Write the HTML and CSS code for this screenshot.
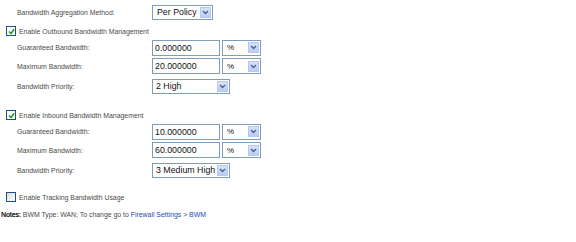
FILE: index.html
```html
<!DOCTYPE html>
<html>
<head>
<meta charset="utf-8">
<link rel="stylesheet" href="styles.css">
</head>
<body>
<div class="page">
  <div class="row r-agg">
    <span class="label">Bandwidth Aggregation Method:</span>
    <span class="sel w-agg"><span class="val">Per Policy</span><span class="btn"><svg width="7" height="5" viewBox="0 0 7 5"><path d="M1 1 L3.5 3.5 L6 1" fill="none" stroke="#4d6185" stroke-width="1.4"/></svg></span></span>
  </div>
  <div class="row r-cb">
    <span class="cb on"><svg width="7" height="7" viewBox="0 0 7 7"><path d="M1 3.5 L3 5.5 L6.2 1.3" fill="none" stroke="#21a121" stroke-width="1.6"/></svg></span>
    <span class="cbtext">Enable Outbound Bandwidth Management</span>
  </div>
  <div class="row r-g">
    <span class="label">Guaranteed Bandwidth:</span>
    <span class="inp">0.000000</span>
    <span class="sel w-pct"><span class="val">%</span><span class="btn"><svg width="7" height="5" viewBox="0 0 7 5"><path d="M1 1 L3.5 3.5 L6 1" fill="none" stroke="#4d6185" stroke-width="1.4"/></svg></span></span>
  </div>
  <div class="row r-m">
    <span class="label">Maximum Bandwidth:</span>
    <span class="inp">20.000000</span>
    <span class="sel w-pct"><span class="val">%</span><span class="btn"><svg width="7" height="5" viewBox="0 0 7 5"><path d="M1 1 L3.5 3.5 L6 1" fill="none" stroke="#4d6185" stroke-width="1.4"/></svg></span></span>
  </div>
  <div class="row r-p">
    <span class="label">Bandwidth Priority:</span>
    <span class="sel w-pri"><span class="val">2 High</span><span class="btn"><svg width="7" height="5" viewBox="0 0 7 5"><path d="M1 1 L3.5 3.5 L6 1" fill="none" stroke="#4d6185" stroke-width="1.4"/></svg></span></span>
  </div>

  <div class="row r-cb gap-top">
    <span class="cb on"><svg width="7" height="7" viewBox="0 0 7 7"><path d="M1 3.5 L3 5.5 L6.2 1.3" fill="none" stroke="#21a121" stroke-width="1.6"/></svg></span>
    <span class="cbtext">Enable Inbound Bandwidth Management</span>
  </div>
  <div class="row r-g">
    <span class="label">Guaranteed Bandwidth:</span>
    <span class="inp">10.000000</span>
    <span class="sel w-pct"><span class="val">%</span><span class="btn"><svg width="7" height="5" viewBox="0 0 7 5"><path d="M1 1 L3.5 3.5 L6 1" fill="none" stroke="#4d6185" stroke-width="1.4"/></svg></span></span>
  </div>
  <div class="row r-m">
    <span class="label">Maximum Bandwidth:</span>
    <span class="inp">60.000000</span>
    <span class="sel w-pct"><span class="val">%</span><span class="btn"><svg width="7" height="5" viewBox="0 0 7 5"><path d="M1 1 L3.5 3.5 L6 1" fill="none" stroke="#4d6185" stroke-width="1.4"/></svg></span></span>
  </div>
  <div class="row r-p">
    <span class="label">Bandwidth Priority:</span>
    <span class="sel w-pri"><span class="val">3 Medium High</span><span class="btn"><svg width="7" height="5" viewBox="0 0 7 5"><path d="M1 1 L3.5 3.5 L6 1" fill="none" stroke="#4d6185" stroke-width="1.4"/></svg></span></span>
  </div>

  <div class="row r-cb gap-top2">
    <span class="cb"></span>
    <span class="cbtext">Enable Tracking Bandwidth Usage</span>
  </div>
  <div class="row r-note">
    <span class="note"><b>Notes:</b> BWM Type: WAN; To change go to <a class="link" href="#">Firewall Settings &gt; BWM</a></span>
  </div>
</div>
</body>
</html>
```

FILE: styles.css
```css
html, body {
  margin: 0;
  padding: 0;
  background: #ffffff;
}
.page {
  font-family: "Liberation Sans", Arial, sans-serif;
  font-size: 6.9px;
  color: #4a4a4a;
  width: 576px;
}
.row {
  display: flex;
  align-items: center;
}
.r-agg { height: 24px; }
.r-cb { height: 14px; padding-left: 6px; }
.r-g { height: 19px; }
.r-m { height: 18px; }
.r-p { height: 22px; }
.r-note { height: 14px; margin-top: 3px; padding-left: 1px; }
.gap-top { margin-top: 11px; }
.gap-top2 { margin-top: 9px; }

.label {
  width: 135px;
  padding-left: 17px;
  flex: none;
}
.cbtext { margin-left: 3px; }

.cb {
  width: 8px;
  height: 8px;
  border: 1px solid #1c5180;
  background: linear-gradient(135deg, #dcdcd7 0%, #ffffff 100%);
  display: inline-flex;
  align-items: center;
  justify-content: center;
  flex: none;
}
.cb.on { background: #ffffff; }

.inp {
  box-sizing: border-box;
  width: 68px;
  height: 16px;
  border: 1px solid #7f9db9;
  font-family: "Liberation Sans", sans-serif;
  font-size: 8.8px;
  color: #111;
  line-height: 14px;
  padding-left: 2px;
  flex: none;
}
.sel {
  box-sizing: border-box;
  display: inline-flex;
  align-items: center;
  height: 15px;
  border: 1px solid #7f9db9;
  background: #fff;
  font-family: "Liberation Sans", sans-serif;
  font-size: 8.8px;
  color: #111;
  padding: 1px;
  flex: none;
}
.sel .val {
  flex: 1;
  padding-left: 2px;
  white-space: nowrap;
  overflow: hidden;
}
.sel .btn {
  width: 11px;
  height: 11px;
  background: linear-gradient(#d6e2fd, #b9cdf8);
  border: 0.5px solid #b5c8f2;
  box-sizing: border-box;
  display: inline-flex;
  align-items: center;
  justify-content: center;
  flex: none;
}
.w-agg { width: 61px; }
.w-agg .val { padding-left: 3px; }
.w-pct { width: 39px; margin-left: 2px; height: 16px; }
.w-pct .val { font-size: 8px; padding-left: 3px; }
.w-pri { width: 78px; }

.note b { font-weight: normal; color: #222; text-shadow: 0.3px 0 0 #222; }
.link { color: #1a4bb0; text-decoration: none; }
```
